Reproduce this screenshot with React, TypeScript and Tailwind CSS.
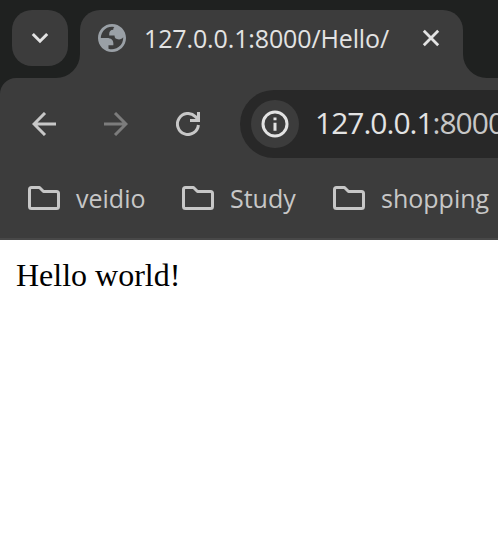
import React from 'react';

const ui = "font-['Open_Sans','Noto_Sans',sans-serif] whitespace-nowrap";

function Folder() {
  return (
    <svg className="h-6 w-8 shrink-0" viewBox="0 0 32 24" fill="none" stroke="#c7c7c7" strokeWidth="3" strokeLinejoin="round">
      <path d="M3.5 1.5H11.5L15.5 5.5H28.5Q30.5 5.5 30.5 7.5V20.5Q30.5 22.5 28.5 22.5H3.5Q1.5 22.5 1.5 20.5V3.5Q1.5 1.5 3.5 1.5Z" />
    </svg>
  );
}

function Bookmark({ label, className }: { label: string; className: string }) {
  return (
    <div className="flex shrink-0 items-center gap-4">
      <Folder />
      <span className={`${ui} block h-9 text-[25px] leading-9 text-[#c7c7c7] ${className}`}>{label}</span>
    </div>
  );
}

function TabStrip() {
  return (
    <div className="flex h-[78px] bg-[#1f2120] pt-[10px] pl-3">
      <button className="flex size-14 shrink-0 items-center justify-center rounded-[20px] bg-[#3c3c3c]">
        <svg className="size-6" viewBox="0 0 24 24" fill="none" stroke="#e3e3e3" strokeWidth="3">
          <path d="M4.8 8L12 15.2L19.2 8" />
        </svg>
      </button>
      <div className="relative ml-3 flex h-[68px] w-[383px] shrink-0 rounded-t-[20px] bg-[#3c3c3c] pl-[18px]">
        <svg className="absolute bottom-0 -left-6 size-6" viewBox="0 0 24 24">
          <path d="M24 0A24 24 0 0 1 0 24H24Z" fill="#3c3c3c" />
        </svg>
        <svg className="absolute -right-6 bottom-0 size-6" viewBox="0 0 24 24">
          <path d="M0 0A24 24 0 0 0 24 24H0Z" fill="#3c3c3c" />
        </svg>
        <svg className="mt-[14px] size-7 shrink-0" viewBox="2 2 20 20" fill="#9aa0a6" fillRule="evenodd">
          <path d="M12 2C6.48 2 2 6.48 2 12s4.48 10 10 10 10-4.48 10-10S17.52 2 12 2zM4 12h4.4c3.407.022 4.922 1.73 4.543 5.127H9.488v2.47a8.004 8.004 0 0 0 10.498-8.083C19.327 12.504 18.332 13 17 13c-2.137 0-3.206-.916-3.206-2.75h-3.748c-.274-2.728.683-4.092 2.87-4.092 0-.975.327-1.597.811-1.97A8.004 8.004 0 0 0 4 12z" />
        </svg>
        <span className={`${ui} mt-[10px] ml-[18px] block h-9 w-[246px] text-[25px] leading-9 tracking-[-0.13px] text-[#e3e3e3]`}>127.0.0.1:8000/Hello/</span>
        <svg className="mt-4 ml-[29px] size-6 shrink-0" viewBox="0 0 24 24" fill="none" stroke="#e3e3e3" strokeWidth="2.8">
          <path d="M4.8 4.8L19.2 19.2M19.2 4.8L4.8 19.2" />
        </svg>
      </div>
    </div>
  );
}

function AddressBar() {
  return (
    <div className="ml-10 flex h-[68px] w-[400px] shrink-0 items-center rounded-l-full bg-[#282828] pl-[11px]">
      <div className="flex size-12 shrink-0 items-center justify-center rounded-full bg-[#3c3c3c]">
        <svg className="size-7" viewBox="0 0 28 28" fill="none">
          <circle cx="14" cy="14" r="12" stroke="#e3e3e3" strokeWidth="3" />
          <path d="M14 12.8V20.8M14 7.4V10.3" stroke="#e3e3e3" strokeWidth="3" />
        </svg>
      </div>
      <span className={`${ui} -mt-0.5 ml-4 text-[30px] leading-9 tracking-[-1px] text-[#e3e3e3]`}>
        127.0.0.1<span className="text-[#c7c7c7]">:8000</span>
      </span>
    </div>
  );
}

function Toolbar() {
  return (
    <div className="flex h-[92px] items-center pl-8">
      <svg className="size-6 shrink-0" viewBox="0 0 24 24" fill="none" stroke="#c7c7c7" strokeWidth="3">
        <path d="M24 12H2.5M13 1L2 12L13 23" />
      </svg>
      <svg className="ml-12 size-6 shrink-0" viewBox="0 0 24 24" fill="none" stroke="#7c7c7c" strokeWidth="3">
        <path d="M0 12H21.5M11 1L22 12L11 23" />
      </svg>
      <svg className="ml-12 size-6 shrink-0" viewBox="0 0 24 24" fill="none" stroke="#c7c7c7" strokeWidth="3">
        <path d="M22.4 13A10.5 10.5 0 1 1 19.4 4.6L22.5 7.7M22.5 0V8.5H14" />
        <path d="M24 3V10H17Z" fill="#c7c7c7" stroke="none" />
      </svg>
      <AddressBar />
    </div>
  );
}

export default function App() {
  return (
    <main className="h-[534px] w-[498px] overflow-hidden bg-white">
      <header className="h-60 bg-[#1f2120]">
        <TabStrip />
        <div className="h-[162px] rounded-tl-[16px] border-b-2 border-[#484848] bg-[#3c3c3c]">
          <Toolbar />
          <div className="flex h-[56px] items-center gap-9 pl-7">
            <Bookmark label="veidio" className="w-[70px]" />
            <Bookmark label="Study" className="w-[67px]" />
            <Bookmark label="shopping" className="w-[110px]" />
          </div>
        </div>
      </header>
      <p className="pt-[17px] pl-4 font-['Liberation_Serif',serif] text-[32px] leading-9 text-black">Hello world!</p>
    </main>
  );
}
